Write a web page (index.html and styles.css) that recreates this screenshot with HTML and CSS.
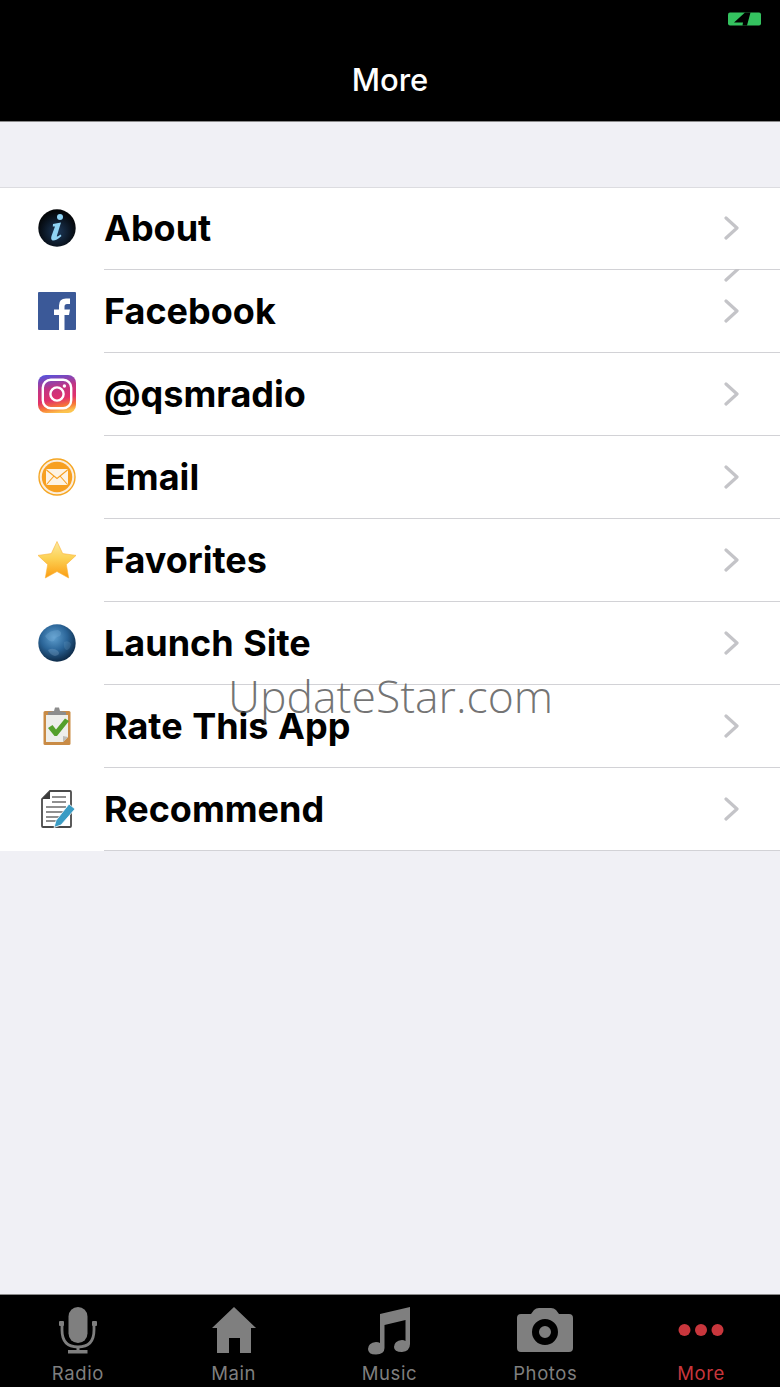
FILE: index.html
```html
<!DOCTYPE html>
<html lang="en">
<head>
  <meta charset="UTF-8" />
  <meta name="viewport" content="width=device-width, initial-scale=1.0" />
  <title>More</title>
  <link rel="stylesheet" href="styles.css">
</head>
<body>
  <header class="topbar">
    <svg class="topbar__battery" width="34" height="14" viewBox="0 0 34 14">
      <rect x="0" y="0.5" width="33" height="13" rx="2" fill="#34c25f" />
      <path d="M17 0.5 L6 10.5 L15 10.5 L14.5 13.5 L19 13.5 L22.5 0.5 Z" fill="#000" />
    </svg>
    <h1 class="topbar__title">More</h1>
  </header>

  <main class="content">
    <ul class="menu">
      <li class="menu__row">
        <svg class="menu__icon" width="38" height="38" viewBox="0 0 38 38">
          <defs>
            <radialGradient id="infoBall" cx="50%" cy="60%" r="55%">
              <stop offset="0" stop-color="#1d3a5c" />
              <stop offset="0.7" stop-color="#0a1420" />
              <stop offset="1" stop-color="#040608" />
            </radialGradient>
          </defs>
          <circle cx="19" cy="19" r="18.7" fill="url(#infoBall)" />
          <circle cx="22" cy="8" r="3" fill="#8fd4f5" />
          <path d="M15 15 L23 13.5 L18.8 27 Q18.8 28.5 22.5 25.5 L23.5 27 Q18 32 14.5 31.5 Q12.5 30.5 13.5 27 L17 17.5 L14.8 17.5 Z" fill="#8fd4f5" />
        </svg>
        <div class="menu__body">
          <span class="menu__label">About</span>
          <svg class="menu__chevron" width="16" height="24" viewBox="0 0 16 24"><path d="M2 2 L13 12 L2 22" /></svg>
        </div>
      </li>
      <li class="menu__row">
        <svg class="menu__icon" width="38" height="38" viewBox="0 0 38 38">
          <rect width="38" height="38" rx="1" fill="#3b5998" />
          <path d="M21 38 L21 23 L16 23 L16 17.5 L21 17.5 L21 13.5 Q21 6.5 28 6.5 L32 6.5 L32 12 L29 12 Q26.5 12 26.5 14.5 L26.5 17.5 L32 17.5 L31 23 L26.5 23 L26.5 38 Z" fill="#fff" />
        </svg>
        <div class="menu__body">
          <span class="menu__label">Facebook</span>
          <svg class="menu__stray" width="16" height="13" viewBox="0 0 16 13"><path d="M14 0 L2 11" /></svg>
          <svg class="menu__chevron" width="16" height="24" viewBox="0 0 16 24"><path d="M2 2 L13 12 L2 22" /></svg>
        </div>
      </li>
      <li class="menu__row">
        <svg class="menu__icon" width="38" height="38" viewBox="0 0 38 38">
          <defs>
            <linearGradient id="instaBg" x1="30%" y1="0%" x2="50%" y2="100%">
              <stop offset="0" stop-color="#5b51d8" />
              <stop offset="0.35" stop-color="#c13584" />
              <stop offset="0.65" stop-color="#e1306c" />
              <stop offset="0.85" stop-color="#f77737" />
              <stop offset="1" stop-color="#fcc44f" />
            </linearGradient>
          </defs>
          <rect width="38" height="38" rx="8" fill="url(#instaBg)" />
          <rect x="4.8" y="4.8" width="28.4" height="28.4" rx="8" fill="none" stroke="#fff" stroke-width="2.4" />
          <circle cx="19" cy="19" r="6.6" fill="none" stroke="#fff" stroke-width="2.4" />
          <circle cx="26.4" cy="11" r="1.7" fill="#fff" />
        </svg>
        <div class="menu__body">
          <span class="menu__label">@qsmradio</span>
          <svg class="menu__chevron" width="16" height="24" viewBox="0 0 16 24"><path d="M2 2 L13 12 L2 22" /></svg>
        </div>
      </li>
      <li class="menu__row">
        <svg class="menu__icon" width="38" height="38" viewBox="0 0 38 38">
          <circle cx="19" cy="19" r="18" fill="#fbeedd" stroke="#f5a623" stroke-width="1.4" />
          <circle cx="19" cy="19" r="15.2" fill="#f7a021" />
          <rect x="8" y="11" width="22" height="16" rx="1.5" fill="#fdf3e4" />
          <path d="M8.5 12 L19 20.5 L29.5 12 M8.5 26.5 L16 18 M29.5 26.5 L22 18" fill="none" stroke="#f7a021" stroke-width="1.1" />
        </svg>
        <div class="menu__body">
          <span class="menu__label">Email</span>
          <svg class="menu__chevron" width="16" height="24" viewBox="0 0 16 24"><path d="M2 2 L13 12 L2 22" /></svg>
        </div>
      </li>
      <li class="menu__row">
        <svg class="menu__icon" width="38" height="38" viewBox="0 0 38 38">
          <defs>
            <linearGradient id="starFill" x1="0" y1="0" x2="0" y2="1">
              <stop offset="0" stop-color="#fce9a0" />
              <stop offset="0.45" stop-color="#fcd255" />
              <stop offset="1" stop-color="#fb9c12" />
            </linearGradient>
          </defs>
          <path d="M19 0.5 L24.7 12.6 L38 14.4 L28.3 23.5 L30.7 37 L19 30.5 L7.3 37 L9.7 23.5 L0 14.4 L13.3 12.6 Z" fill="url(#starFill)" stroke="#fbb437" stroke-width="0.6" stroke-linejoin="round" />
        </svg>
        <div class="menu__body">
          <span class="menu__label">Favorites</span>
          <svg class="menu__chevron" width="16" height="24" viewBox="0 0 16 24"><path d="M2 2 L13 12 L2 22" /></svg>
        </div>
      </li>
      <li class="menu__row">
        <svg class="menu__icon" width="38" height="38" viewBox="0 0 38 38">
          <defs>
            <radialGradient id="globeFill" cx="42%" cy="35%" r="65%">
              <stop offset="0" stop-color="#5f9fcf" />
              <stop offset="0.55" stop-color="#2a6497" />
              <stop offset="1" stop-color="#0e2c4a" />
            </radialGradient>
          </defs>
          <circle cx="19" cy="19" r="18.7" fill="url(#globeFill)" />
          <path d="M7 12 Q12 6 20 6 Q25 8 22 12 Q17 13 16 17 Q11 19 7 12 Z" fill="#7db3dc" opacity="0.3" />
          <path d="M10 26 Q15 23 20 27 Q23 31 17 32 Q12 31 10 26 Z" fill="#8fb4d0" opacity="0.3" />
          <path d="M26 18 Q31 16 33 20 Q32 26 28 26 Q25 23 26 18 Z" fill="#6d9cc0" opacity="0.25" />
        </svg>
        <div class="menu__body">
          <span class="menu__label">Launch Site</span>
          <svg class="menu__chevron" width="16" height="24" viewBox="0 0 16 24"><path d="M2 2 L13 12 L2 22" /></svg>
        </div>
      </li>
      <li class="menu__row">
        <svg class="menu__icon" width="38" height="38" viewBox="0 0 38 38">
          <rect x="5.5" y="4" width="27" height="34" rx="1.5" fill="#c98b45" />
          <path d="M8 8 L30 8 L30 30 L25 35 L8 35 Z" fill="#eeeeea" />
          <path d="M25 35 L30 30 L25 29 Z" fill="#bdbdb8" />
          <path d="M17 0.5 L21 0.5 L22 4 L28 5 L28 8 L10 8 L10 5 L16 4 Z" fill="#8d8d8d" />
          <path d="M10 21 L14.5 18 L18 22.5 L27 11.5 L31 14 L19 29 L16.5 29 Z" fill="#55a02b" />
        </svg>
        <div class="menu__body">
          <span class="menu__label">Rate This App</span>
          <svg class="menu__chevron" width="16" height="24" viewBox="0 0 16 24"><path d="M2 2 L13 12 L2 22" /></svg>
        </div>
      </li>
      <li class="menu__row">
        <svg class="menu__icon" width="38" height="38" viewBox="0 0 38 38">
          <path d="M12 1 L32 1 Q33 1 33 2 L33 36 Q33 37 32 37 L5 37 Q4 37 4 36 L4 9 Z" fill="#fff" stroke="#4a4a4a" stroke-width="1.8" />
          <path d="M12 1 L4 9 L12 9 Z" fill="#3c3c3c" />
          <path d="M14 7 L28 7 M14 12 L28 12 M8 17 L28 17 M8 22 L26 22 M8 27 L22 27 M8 31 L18 31" stroke="#6b6b6b" stroke-width="1.4" />
          <path d="M31 14 L37 19 L23 35 L16 37.5 L18 30.5 Z" fill="#3a9cc4" stroke="#fff" stroke-width="0.8" />
        </svg>
        <div class="menu__body">
          <span class="menu__label">Recommend</span>
          <svg class="menu__chevron" width="16" height="24" viewBox="0 0 16 24"><path d="M2 2 L13 12 L2 22" /></svg>
        </div>
      </li>
    </ul>
  </main>

  <span class="watermark">UpdateStar.com</span>

  <nav class="tabbar">
    <a class="tabbar__item">
      <svg class="tabbar__icon" width="40" height="50" viewBox="0 0 40 50">
        <rect x="10.5" y="2" width="19" height="36" rx="9.5" />
        <path d="M4 17 L4 25 Q4 42 20 42 Q36 42 36 25 L36 17" fill="none" stroke="#7f7f7f" stroke-width="2.8" />
        <rect x="1" y="16" width="5" height="5" rx="1" />
        <rect x="34" y="16" width="5" height="5" rx="1" />
        <rect x="18.5" y="42" width="3" height="4" />
        <rect x="10" y="45" width="19.5" height="3.5" />
      </svg>
      <span class="tabbar__label">Radio</span>
    </a>
    <a class="tabbar__item">
      <svg class="tabbar__icon" width="46" height="50" viewBox="0 0 46 50">
        <path d="M23 2 L45 23 L40 23 L40 48 L29 48 L29 33 L18 33 L18 48 L6 48 L6 23 L1 23 Z" />
      </svg>
      <span class="tabbar__label">Main</span>
    </a>
    <a class="tabbar__item">
      <svg class="tabbar__icon" width="46" height="50" viewBox="0 0 46 50">
        <path d="M14 9 L44 2 L44 39 Q44 46 36 47 Q28 47 28 42 Q28 36 36 35 Q38 35 39.5 36 L39.5 15 L18.5 20 L18.5 43 Q18.5 49 10 49.5 Q2 49.5 2 44 Q2 38 10 37 Q12.5 37 14 38 Z" />
      </svg>
      <span class="tabbar__label">Music</span>
    </a>
    <a class="tabbar__item">
      <svg class="tabbar__icon" width="58" height="50" viewBox="0 0 58 50">
        <path fill-rule="evenodd" d="M5 9 L15 9 L18 5 Q20 3 23 3 L35 3 Q38 3 40 5 L43 9 L53 9 Q57 9 57 13 L57 43 Q57 47 53 47 L5 47 Q1 47 1 43 L1 13 Q1 9 5 9 Z M29 14 A13 13 0 1 0 29 40 A13 13 0 1 0 29 14 Z M29 21 A6 6 0 1 1 29 33 A6 6 0 1 1 29 21 Z" />
      </svg>
      <span class="tabbar__label">Photos</span>
    </a>
    <a class="tabbar__item tabbar__item--active">
      <svg class="tabbar__icon" width="46" height="50" viewBox="0 0 46 50">
        <circle cx="6.5" cy="25" r="6" />
        <circle cx="23" cy="25" r="6" />
        <circle cx="39.5" cy="25" r="6" />
      </svg>
      <span class="tabbar__label">More</span>
    </a>
  </nav>
</body>
</html>
```

FILE: styles.css
```css
* {
  box-sizing: border-box;
}

html,
body {
  height: 100%;
}

body {
  position: relative;
  margin: 0;
  display: flex;
  flex-direction: column;
  font-family: 'Inter', 'Liberation Sans', sans-serif;
  background-color: #f0f0f5;
  color: #000;
}

.topbar {
  position: relative;
  height: 122px;
  padding-top: 60px;
  background-color: #000;
  border-bottom: 1px solid #8a8a8a;
}

.topbar__title {
  margin: 0;
  font-size: 31px;
  line-height: 40px;
  font-weight: 500;
  text-align: center;
  color: #fff;
}

.topbar__battery {
  position: absolute;
  top: 12px;
  left: 728px;
}

.content {
  flex: 1;
  padding-top: 65px;
}

.menu {
  margin: 0;
  padding: 0;
  list-style: none;
  background-color: #fff;
  border-top: 1px solid #dcdce0;
}

.menu__row {
  display: flex;
  align-items: center;
  height: 83px;
  padding-left: 38px;
}

.menu__row:first-child {
  height: 82px;
}

.menu__row:first-child .menu__body {
  padding-bottom: 1px;
}

.menu__icon {
  flex-shrink: 0;
  margin-top: -2px;
}

.menu__body {
  position: relative;
  flex: 1;
  display: flex;
  align-items: center;
  justify-content: space-between;
  align-self: stretch;
  margin-left: 28px;
  padding-right: 40px;
  border-bottom: 1px solid #d2d2d6;
}

.menu__label {
  font-size: 36px;
  font-weight: 700;
  word-spacing: 1px;
}

.menu__chevron path,
.menu__stray path {
  fill: none;
  stroke: #c4c4c8;
  stroke-width: 3.2;
  stroke-linecap: round;
  stroke-linejoin: round;
}

.menu__stray {
  position: absolute;
  top: -1px;
  right: 40px;
}

.watermark {
  position: absolute;
  top: 667px;
  left: 228px;
  font-family: 'Open Sans', sans-serif;
  font-size: 44.5px;
  font-weight: 300;
  line-height: 58px;
  color: rgba(70, 70, 70, 0.75);
}

.tabbar {
  display: flex;
  height: 93px;
  padding-right: 1px;
  background-color: #000;
  border-top: 1px solid #8a8a8a;
}

.tabbar__item {
  flex: 1;
  display: flex;
  flex-direction: column;
  align-items: center;
  padding-top: 10px;
  color: #7f7f7f;
}

.tabbar__item--active {
  color: #c8363c;
}

.tabbar__icon {
  display: block;
  fill: currentColor;
}

.tabbar__label {
  font-size: 18.5px;
  line-height: 24px;
  letter-spacing: 0.6px;
  margin-top: 6px;
}
```
